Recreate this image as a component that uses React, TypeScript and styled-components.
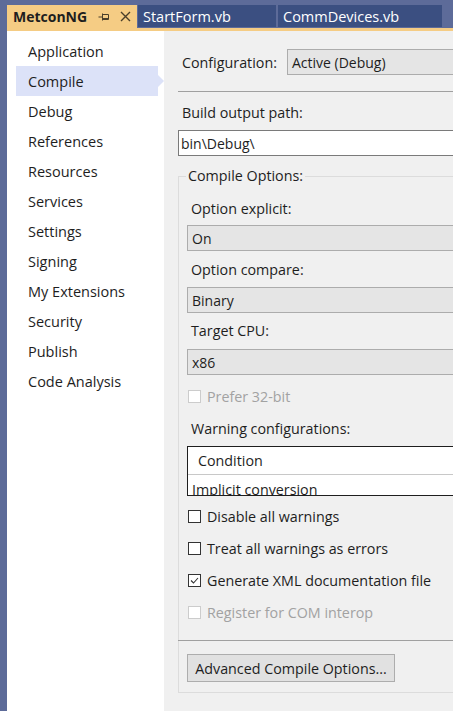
import React from 'react'
import styled, { createGlobalStyle } from 'styled-components'

const GlobalStyle = createGlobalStyle`
  html, body {
    margin: 0;
    padding: 0;
    overflow: hidden;
  }
  body {
    font-family: 'Segoe UI', 'Open Sans', sans-serif;
    color: #1e1e1e;
  }
`

const Window = styled.div`
  width: 453px;
  height: 711px;
  background: #5d6b99;
  padding: 5px 0 0 7px;
  box-sizing: border-box;
  display: flex;
  flex-direction: column;
  overflow: hidden;
`

const TabWell = styled.div`
  display: flex;
  align-items: flex-start;
  height: 23px;
`

const Tab = styled.div<{ $active?: boolean; $width: number; $gap?: number }>`
  width: ${p => p.$width}px;
  height: ${p => (p.$active ? 23 : 22)}px;
  margin-left: ${p => p.$gap ?? 0}px;
  flex-shrink: 0;
  box-sizing: border-box;
  display: flex;
  align-items: center;
  padding-left: ${p => (p.$active ? 6 : 5)}px;
  font-size: ${p => (p.$active ? 14 : 14.5)}px;
  font-weight: ${p => (p.$active ? 700 : 400)};
  background: ${p => (p.$active ? '#f5cc84' : '#3b4f81')};
  color: ${p => (p.$active ? '#1e1e1e' : '#ffffff')};
`

const TabIcons = styled.div`
  display: flex;
  align-items: center;
  gap: 10px;
  margin-left: 11px;
`

const TabStrip = styled.div`
  height: 3px;
  background: #f5cc84;
`

const Body = styled.div`
  flex: 1;
  display: flex;
  min-height: 0;
`

const Sidebar = styled.nav`
  width: 157px;
  flex-shrink: 0;
  background: #ffffff;
  padding-top: 5px;
  box-sizing: border-box;
`

const NavItem = styled.div<{ $selected?: boolean }>`
  position: relative;
  height: 30px;
  margin-left: 9px;
  width: 142px;
  padding-left: 12px;
  box-sizing: border-box;
  display: flex;
  align-items: center;
  font-size: 14.5px;
  background: ${p => (p.$selected ? '#dce2f8' : 'transparent')};
  &::after {
    content: '';
    display: ${p => (p.$selected ? 'block' : 'none')};
    position: absolute;
    right: -6px;
    top: 9px;
    border-top: 6px solid transparent;
    border-bottom: 6px solid transparent;
    border-left: 6px solid #dce2f8;
  }
`

const Panel = styled.main`
  flex: 1;
  min-width: 0;
  background: #f0f0f0;
  padding: 18px 0 0 14px;
  box-sizing: border-box;
  overflow: hidden;
  font-size: 14.3px;
`

const Inner = styled.div`
  width: 420px;
`

const ConfigRow = styled.div`
  display: flex;
  align-items: center;
  padding-left: 4px;
`

const RowLabel = styled.span`
  width: 105px;
  flex-shrink: 0;
`

const Combo = styled.div`
  flex: 1;
  height: 26px;
  box-sizing: border-box;
  border: 1px solid #acacac;
  background: #e5e5e5;
  display: flex;
  align-items: center;
  padding-left: 4px;
  font-size: 14px;
`

const Separator = styled.div<{ $top: number }>`
  height: 1px;
  background: #a0a0a0;
  margin-top: ${p => p.$top}px;
`

const FieldLabel = styled.div<{ $top: number }>`
  height: 20px;
  line-height: 20px;
  margin-top: ${p => p.$top}px;
  padding-left: 4px;
`

const TextInput = styled.div`
  margin-top: 7px;
  height: 26px;
  box-sizing: border-box;
  border: 1px solid #7a7a7a;
  background: #ffffff;
  display: flex;
  align-items: center;
  padding-left: 2px;
  font-size: 14px;
`

const Group = styled.fieldset`
  margin: 10px 0 0 0;
  padding: 0 0 10px 8px;
  border: 1px solid #dcdcdc;
  border-right: none;
  min-width: 0;
`

const Legend = styled.legend`
  padding: 0 2px;
  margin-left: -1px;
  height: 20px;
  line-height: 20px;
`

const GroupCombo = styled(Combo)<{ $top: number }>`
  margin-top: ${p => p.$top}px;
  flex: none;
`

const CheckRow = styled.label<{ $top: number; $disabled?: boolean }>`
  display: flex;
  align-items: center;
  height: 20px;
  margin-top: ${p => p.$top}px;
  padding-left: 1px;
  color: ${p => (p.$disabled ? '#a2a2a2' : '#1e1e1e')};
`

const Box = styled.span<{ $disabled?: boolean }>`
  width: 13px;
  height: 13px;
  box-sizing: border-box;
  border: 1px solid ${p => (p.$disabled ? '#cccccc' : '#333333')};
  background: #ffffff;
  margin-right: 6px;
  display: flex;
  align-items: center;
  justify-content: center;
`

const ListBox = styled.div`
  margin-top: 7px;
  height: 50px;
  box-sizing: border-box;
  border: 1px solid #1e1e1e;
  border-right: none;
  background: #ffffff;
  overflow: hidden;
`

const ListRow = styled.div<{ $first?: boolean }>`
  height: 27px;
  line-height: ${p => (p.$first ? 27 : 29)}px;
  padding-left: ${p => (p.$first ? 10 : 4)}px;
  border-bottom: 1px solid #c8c8c8;
  white-space: nowrap;
`

const GroupSeparator = styled(Separator)`
  margin-left: -9px;
`

const Button = styled.button`
  margin-top: 13px;
  width: 208px;
  height: 28px;
  border: 1px solid #adadad;
  background: #e1e1e1;
  font-family: inherit;
  font-size: 14.3px;
  color: #1e1e1e;
  padding: 0;
`

const PinIcon = () => (
  <svg width="12" height="10" viewBox="0 0 12 10">
    <path d="M0.5 5h4M4.5 1.5v7M4.5 2.5h6v5h-6M4.5 6.5h6" stroke="#4a3f2a" strokeWidth="1" fill="none" />
  </svg>
)

const CloseIcon = () => (
  <svg width="11" height="11" viewBox="0 0 11 11">
    <path d="M1 1l9 9M10 1l-9 9" stroke="#4a3f2a" strokeWidth="1.4" fill="none" />
  </svg>
)

const Check = () => (
  <svg width="11" height="11" viewBox="0 0 11 11">
    <path d="M2 5.5l2.5 2.5 4.5-5" stroke="#333" strokeWidth="1.1" fill="none" />
  </svg>
)

const navItems = [
  'Application', 'Compile', 'Debug', 'References', 'Resources', 'Services',
  'Settings', 'Signing', 'My Extensions', 'Security', 'Publish', 'Code Analysis',
]

export default function App() {
  return (
    <Window>
      <GlobalStyle />
      <TabWell>
        <Tab $active $width={130}>
          MetconNG
          <TabIcons>
            <PinIcon />
            <CloseIcon />
          </TabIcons>
        </Tab>
        <Tab $width={138} $gap={1}>StartForm.vb</Tab>
        <Tab $width={164} $gap={2}>CommDevices.vb</Tab>
      </TabWell>
      <TabStrip />
      <Body>
        <Sidebar>
          {navItems.map(n => (
            <NavItem key={n} $selected={n === 'Compile'}>{n}</NavItem>
          ))}
        </Sidebar>
        <Panel>
          <Inner>
            <ConfigRow>
              <RowLabel>Configuration:</RowLabel>
              <Combo>Active (Debug)</Combo>
            </ConfigRow>
            <Separator $top={16} />
            <FieldLabel $top={11}>Build output path:</FieldLabel>
            <TextInput>bin\Debug\</TextInput>
            <Group>
              <Legend>Compile Options:</Legend>
              <FieldLabel $top={13}>Option explicit:</FieldLabel>
              <GroupCombo $top={6}>On</GroupCombo>
              <FieldLabel $top={9}>Option compare:</FieldLabel>
              <GroupCombo $top={7}>Binary</GroupCombo>
              <FieldLabel $top={8}>Target CPU:</FieldLabel>
              <GroupCombo $top={8}>x86</GroupCombo>
              <CheckRow $top={11} $disabled>
                <Box $disabled />
                Prefer 32-bit
              </CheckRow>
              <FieldLabel $top={13}>Warning configurations:</FieldLabel>
              <ListBox>
                <ListRow $first>Condition</ListRow>
                <ListRow>Implicit conversion</ListRow>
              </ListBox>
              <CheckRow $top={10}>
                <Box />
                Disable all warnings
              </CheckRow>
              <CheckRow $top={12}>
                <Box />
                Treat all warnings as errors
              </CheckRow>
              <CheckRow $top={12}>
                <Box><Check /></Box>
                Generate XML documentation file
              </CheckRow>
              <CheckRow $top={12} $disabled>
                <Box $disabled />
                Register for COM interop
              </CheckRow>
              <GroupSeparator $top={18} />
              <Button>Advanced Compile Options...</Button>
            </Group>
          </Inner>
        </Panel>
      </Body>
    </Window>
  )
}
